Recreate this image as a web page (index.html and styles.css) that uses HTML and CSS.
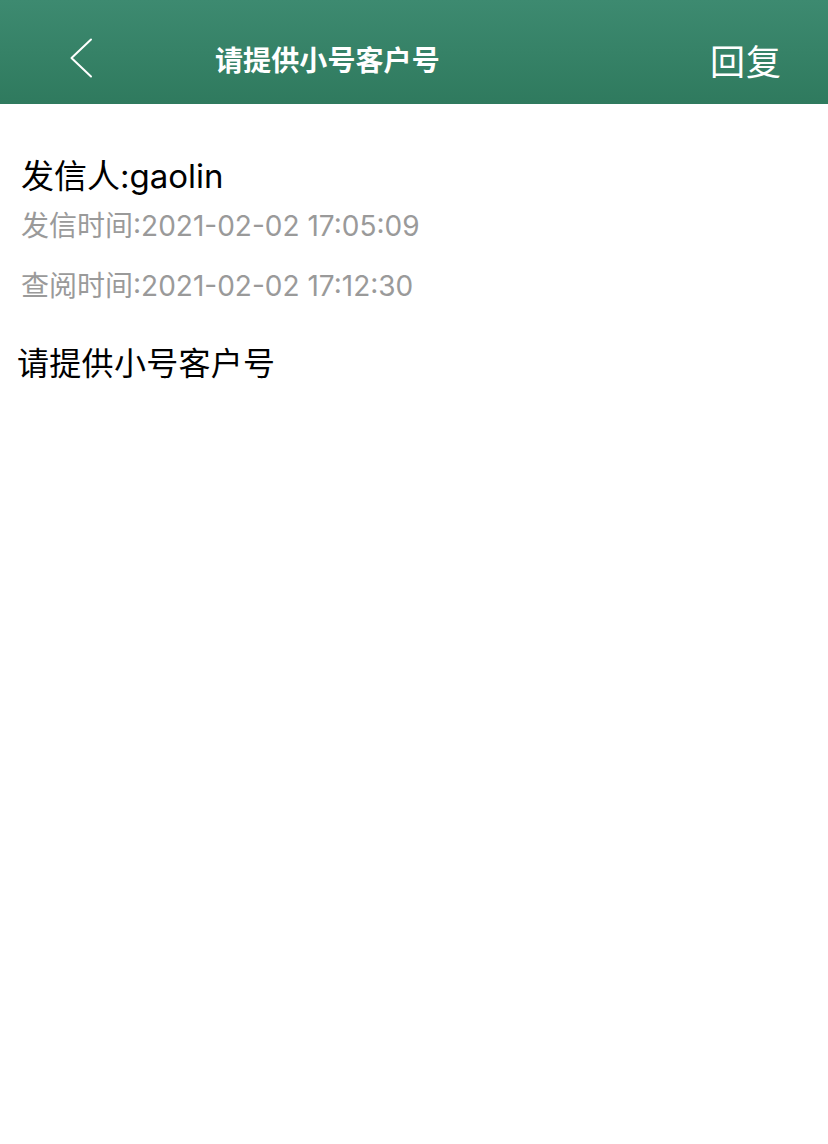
FILE: index.html
```html
<!DOCTYPE html>
<html lang="zh-CN">
<head>
<meta charset="utf-8">
<title>请提供小号客户号</title>
<link rel="stylesheet" href="styles.css">
</head>
<body>
<header class="nav">
  <div class="nav-back">
    <svg width="24" height="40" viewBox="0 0 24 40"><path d="M22 1.5 L2.5 20 L22 38.5" fill="none" stroke="#fff" stroke-width="2" stroke-linecap="round" stroke-linejoin="round"/></svg>
  </div>
  <div class="nav-title">请提供小号客户号</div>
  <div class="nav-action">回复</div>
</header>
<main class="content">
  <div class="sender">发信人:gaolin</div>
  <div class="meta">发信时间:2021-02-02 17:05:09</div>
  <div class="meta meta-second">查阅时间:2021-02-02 17:12:30</div>
  <div class="message">请提供小号客户号</div>
</main>
</body>
</html>
```
FILE: styles.css
```css
* { box-sizing: border-box; }
html, body { margin: 0; padding: 0; background: #fff; }
body {
  width: 828px;
  height: 1144px;
  font-family: "Inter", "Noto Sans CJK SC", sans-serif;
  color: #000;
}
.nav {
  height: 104px;
  background: linear-gradient(#3d8a70, #2f7a5e);
  display: flex;
  align-items: center;
  padding: 14px 46px 0 69px;
  color: #fff;
}
.nav-back { width: 24px; height: 40px; display: flex; margin-top: -2px; }
.nav-title {
  font-size: 28px;
  font-weight: 700;
  margin-left: 122px;
  letter-spacing: 0.1px;
  flex: 1;
}
.nav-action { font-size: 35px; letter-spacing: 1px; }
.content { padding: 52px 18px 0 20px; }
.sender { font-size: 33px; line-height: 40px; padding-left: 1px; }
.meta {
  font-size: 28px;
  color: #9a9a9a;
  line-height: 40px;
  margin-top: 10px;
  padding-left: 1px;
}
.meta-second { margin-top: 20px; }
.message { font-size: 32px; line-height: 40px; margin-top: 38px; margin-left: -3px; letter-spacing: 0.3px; }
```
